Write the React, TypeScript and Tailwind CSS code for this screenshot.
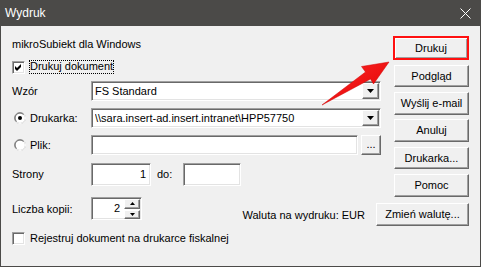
import React from "react";

const raised =
  "bg-[#f0f0f0] border border-t-white border-l-white border-b-[#696969] border-r-[#696969] shadow-[inset_-1px_-1px_0_#a0a0a0]";
const sunken =
  "bg-white border border-t-[#a0a0a0] border-l-[#a0a0a0] border-b-white border-r-white shadow-[inset_1px_1px_0_#696969,inset_-1px_-1px_0_#e3e3e3]";

function Btn({ children, className = "" }: { children: React.ReactNode; className?: string }) {
  return (
    <div className={`${raised} h-[23px] flex items-center justify-center ${className}`}>
      {children}
    </div>
  );
}

function Check({ checked }: { checked?: boolean }) {
  return (
    <div className={`${sunken} w-[13px] h-[13px] shrink-0 relative`}>
      {checked && (
        <svg width="13" height="13" viewBox="0 0 13 13" className="absolute -left-px -top-px">
          <path d="M3 5 L5 7 L9 3 L9 6 L5 10 L3 8 Z" fill="#000" />
        </svg>
      )}
    </div>
  );
}

function Radio({ checked }: { checked?: boolean }) {
  return (
    <svg width="12" height="12" viewBox="0 0 12 12" className="shrink-0">
      <circle cx="6" cy="6" r="5.5" fill="#fff" stroke="#a0a0a0" />
      <path d="M9.9 2.1 A5.5 5.5 0 0 1 2.1 9.9" fill="none" stroke="#ffffff" />
      <path d="M2.5 9.5 A4.5 4.5 0 0 1 9.5 2.5" fill="none" stroke="#696969" />
      {checked && <circle cx="6" cy="6" r="2" fill="#000" />}
    </svg>
  );
}

function DropBtn() {
  return (
    <div className={`${raised} w-[17px] h-[16px] flex items-center justify-center shrink-0`}>
      <svg width="7" height="4" viewBox="0 0 7 4">
        <path d="M0 0 H7 L3.5 4 Z" fill="#000" />
      </svg>
    </div>
  );
}

function Combo({ text }: { text: string }) {
  return (
    <div className={`${sunken} w-[290px] h-[20px] flex items-center pl-[3px] pr-[1px]`}>
      <span className="flex-1 truncate">{text}</span>
      <DropBtn />
    </div>
  );
}

export default function App() {
  return (
    <div
      className="w-[481px] h-[267px] flex flex-col relative overflow-hidden"
      style={{ fontFamily: '"Liberation Sans", Arial, sans-serif' }}
    >
      <div className="h-[26px] shrink-0 bg-[#4b4a48] flex items-center justify-between pl-[5px] pr-[10px] text-white text-[12px]">
        <span>Wydruk</span>
        <svg width="11" height="11" viewBox="0 0 11 11">
          <path d="M0.5 0.5 L10.5 10.5 M10.5 0.5 L0.5 10.5" stroke="#fff" strokeWidth="1" />
        </svg>
      </div>
      <div className="flex-1 bg-[#f0f0f0] border-x border-b border-[#4b4a48] flex flex-col text-[11px] text-black">
        <div className="flex h-[171px] shrink-0">
          <div className="w-[370px] ml-[11px] flex flex-col">
            <div className="mt-[11px] h-[14px] leading-[14px]">mikroSubiekt dla Windows</div>
            <div className="mt-[9px] h-[14px] flex items-center">
              <Check checked />
              <span className="ml-[4px] px-px h-[14px] leading-[13px] outline outline-1 outline-dotted outline-black -outline-offset-1">
                Drukuj dokument
              </span>
            </div>
            <div className="mt-[7px] h-[20px] flex items-center">
              <span className="w-[79px]">Wzór</span>
              <Combo text="FS Standard" />
            </div>
            <div className="mt-[7px] h-[20px] flex items-center">
              <div className="w-[79px] flex items-center pl-[2px]">
                <Radio checked />
                <span className="ml-[4px]">Drukarka:</span>
              </div>
              <Combo text="\\sara.insert-ad.insert.intranet\HPP57750" />
            </div>
            <div className="mt-[7px] h-[20px] flex items-center">
              <div className="w-[79px] flex items-center pl-[2px]">
                <Radio />
                <span className="ml-[4px]">Plik:</span>
              </div>
              <div className={`${sunken} w-[267px] h-[20px]`} />
              <Btn className="ml-[3px] w-[20px] !h-[20px] items-end pb-[2px]">...</Btn>
            </div>
            <div className="mt-[8px] h-[23px] flex items-center">
              <span className="w-[79px]">Strony</span>
              <div className={`${sunken} w-[60px] h-[23px] flex items-center justify-end pr-[4px]`}>1</div>
              <span className="ml-[6px] w-[26px]">do:</span>
              <div className={`${sunken} w-[58px] h-[23px]`} />
            </div>
          </div>
          <div className="ml-[11px] w-[76px] pt-[10px] flex flex-col">
            <div className="h-[24px] border-2 border-[#ff1010] bg-[#f0f0f0] shadow-[inset_1px_1px_0_#fff,inset_-1px_-1px_0_#a0a0a0] flex items-center justify-center">
              Drukuj
            </div>
            <Btn className="mt-[5px] ml-px">Podgląd</Btn>
            <Btn className="mt-[5px] ml-px">Wyślij e-mail</Btn>
            <Btn className="mt-[4px] ml-px">Anuluj</Btn>
            <Btn className="mt-[5px] ml-px">Drukarka...</Btn>
            <Btn className="mt-[5px] ml-px">Pomoc</Btn>
          </div>
        </div>
        <div className="flex items-start pl-[11px] pr-[11px] h-[29px] shrink-0">
          <span className="w-[79px] mt-[5px] leading-[14px]">Liczba kopii:</span>
          <div className={`${sunken} w-[51px] h-[23px] flex items-center`}>
            <span className="flex-1 text-right pr-[4px]">2</span>
            <div className="flex flex-col w-[16px] mr-px gap-px">
              <div className={`${raised} h-[10px] flex items-center justify-center`}>
                <svg width="5" height="3" viewBox="0 0 5 3">
                  <path d="M2.5 0 L5 3 H0 Z" fill="#000" />
                </svg>
              </div>
              <div className={`${raised} h-[9px] flex items-center justify-center`}>
                <svg width="5" height="3" viewBox="0 0 5 3">
                  <path d="M0 0 H5 L2.5 3 Z" fill="#000" />
                </svg>
              </div>
            </div>
          </div>
          <div className="flex-1" />
          <span className="mt-[11px] leading-[14px]">Waluta na wydruku: EUR</span>
          <Btn className="ml-[11px] mt-[6px] w-[93px]">Zmień walutę...</Btn>
        </div>
        <div className="mt-[6px] ml-[11px] h-[13px] flex items-center">
          <Check />
          <span className="ml-[5px] leading-[13px]">Rejestruj dokument na drukarce fiskalnej</span>
        </div>
      </div>
      <svg
        width="481"
        height="267"
        viewBox="0 0 481 267"
        className="absolute left-0 top-0 pointer-events-none"
      >
        <defs>
          <linearGradient id="ag" x1="0" y1="0" x2="1" y2="1">
            <stop offset="0" stopColor="#ff2a2a" />
            <stop offset="1" stopColor="#e00000" />
          </linearGradient>
        </defs>
        <polygon
          points="322,105 365.5,72 361.5,66.5 389,62 373.5,84 370.5,79"
          fill="url(#ag)"
          stroke="#d00000"
          strokeWidth="0.5"
          strokeLinejoin="round"
        />
      </svg>
    </div>
  );
}
